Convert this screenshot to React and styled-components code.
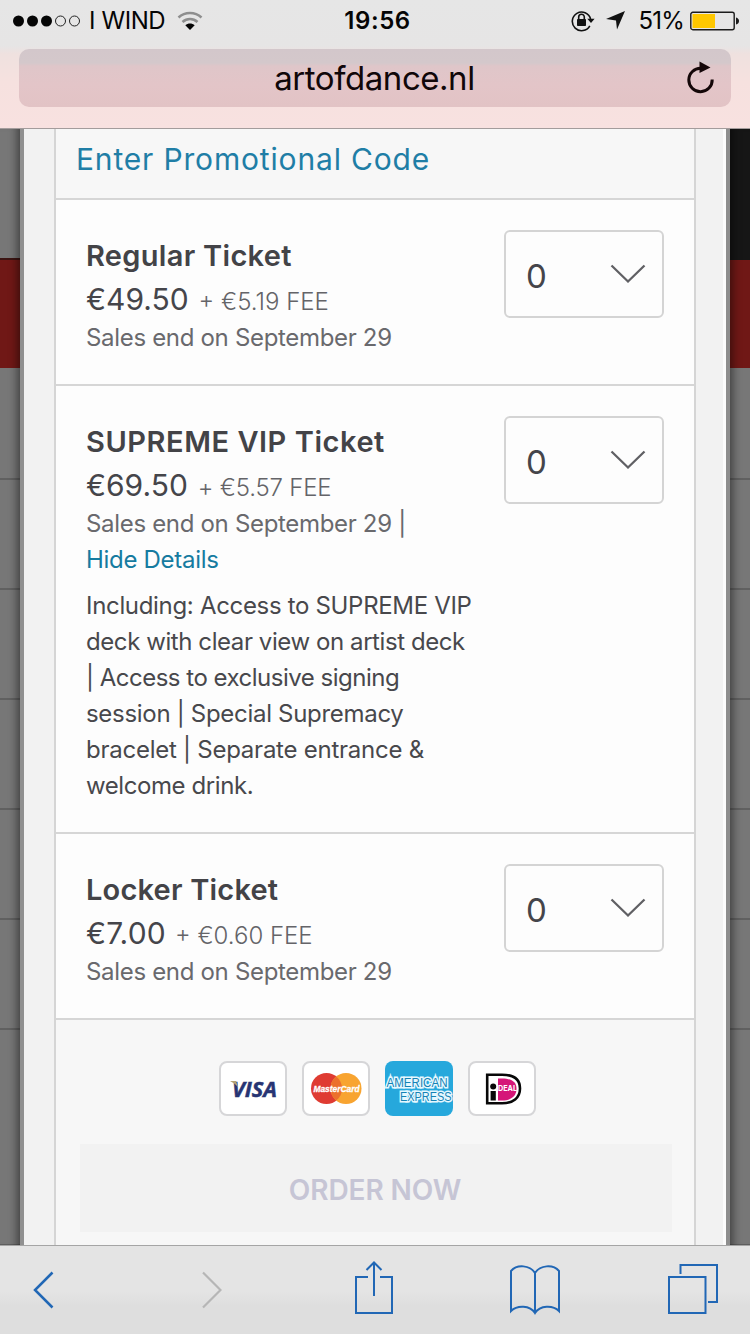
import React from 'react';
import styled, { createGlobalStyle } from 'styled-components';

const GlobalStyle = createGlobalStyle`
  *, *::before, *::after { box-sizing: border-box; }
  body {
    margin: 0;
    font-family: Inter, "Liberation Sans", sans-serif;
    color: #45454a;
    background: #777;
  }
  svg { display: block; flex: none; }
`;

const Screen = styled.div`
  width: 750px;
  height: 1334px;
  display: flex;
  flex-direction: column;
  overflow: hidden;
`;

const Header = styled.header`
  height: 129px;
  flex: none;
  border-bottom: 1px solid #a39c9c;
  background: linear-gradient(#e6e6e6 0, #e6e5e5 46px, #efe1df 54px, #f6e1df 82px, #f8e1e0 128px);
`;

const StatusBar = styled.div`
  height: 49px;
  padding: 0 11px 8px 13px;
  display: grid;
  grid-template-columns: 1fr 80px 1fr;
  align-items: center;
  color: #050505;
  font-size: 24px;
  line-height: 40px;
`;

const StatusGroup = styled.div`
  display: flex;
  align-items: center;
  justify-content: ${(p) => (p.$end ? 'flex-end' : 'flex-start')};
`;

const Carrier = styled.span`
  margin: 0 12px 0 8px;
  letter-spacing: -0.4px;
`;

const Clock = styled.span`
  font-weight: 600;
  text-align: center;
  white-space: nowrap;
  margin-left: 3px;
  letter-spacing: 0.6px;
`;

const LocationSlot = styled.span`
  margin-left: 11px;
`;

const Percent = styled.span`
  margin: 0 6px 0 12px;
  letter-spacing: -0.8px;
`;

const AddressBar = styled.div`
  height: 58px;
  margin: 0 19px;
  padding: 0 16px 0 45px;
  border-radius: 10px;
  display: flex;
  align-items: center;
  background: linear-gradient(#d3c7cb 0, #d4c8cb 14px, #dfc6c9 17px, #e3c5c8 36px, #e2c3c5 58px);
`;

const Address = styled.span`
  flex: 1;
  text-align: center;
  font-size: 33px;
  line-height: 56px;
  letter-spacing: -0.45px;
  color: #100709;
`;

const Viewport = styled.main`
  flex: 1;
  min-height: 0;
  display: flex;
  overflow: hidden;
`;

const Backdrop = styled.div`
  width: ${(p) => p.$width}px;
  flex: none;
  display: flex;
  flex-direction: column;
  box-shadow: inset ${(p) => (p.$right ? '10px' : '-10px')} 0 9px -7px rgba(0, 0, 0, 0.45);
`;

const Band = styled.div`
  height: ${(p) => p.$height}px;
  flex: none;
  position: relative;
  z-index: -1;
  background: ${(p) => p.$color || '#777'};
  border-bottom: 2px solid ${(p) => p.$edge || '#606060'};
`;

const Modal = styled.div`
  flex: 1;
  display: flex;
  padding: 0 30px;
  background: #f2f2f2;
  border-left: 4px solid #909090;
  border-right: 4px solid #8e8e8e;
  box-shadow: inset -3px 0 0 #fcfcfc;
`;

const Panel = styled.section`
  flex: 1;
  background: #fdfdfd;
  border-left: 2px solid #d5d5d5;
  border-right: 2px solid #d5d5d5;
`;

const Promo = styled.div`
  height: 71px;
  padding: 9px 0 0 20px;
  background: #f7f7f7;
  border-bottom: 2px solid #d6d6d6;
  color: #1f7ea6;
  font-size: 30px;
  line-height: 42px;
  letter-spacing: 0.83px;
`;

const TicketRow = styled.article`
  padding: 34px 30px 28px;
  display: flex;
  justify-content: space-between;
  align-items: flex-start;
  border-bottom: 2px solid #d6d6d6;
`;

const TicketInfo = styled.div`
  white-space: nowrap;
`;

const TicketName = styled.h2`
  margin: 0;
  font-size: 29px;
  font-weight: 600;
  line-height: 44px;
  color: #434347;
  letter-spacing: ${(p) => p.$track}px;
`;

const PriceLine = styled.div`
  height: 42px;
  display: flex;
  align-items: baseline;
  line-height: 42px;
`;

const Price = styled.span`
  font-size: 30px;
  letter-spacing: ${(p) => p.$track}px;
`;

const Fee = styled.span`
  margin-left: ${(p) => p.$gap || 11}px;
  font-size: 24px;
  font-weight: 350;
  color: #646468;
  letter-spacing: ${(p) => p.$track}px;
`;

const Line = styled.div`
  font-size: 24px;
  line-height: 36px;
  color: ${(p) => p.$color || '#48484c'};
  letter-spacing: ${(p) => p.$track || 0}px;
`;

const Details = styled.div`
  margin-top: 10px;
`;

const Quantity = styled.div`
  width: 160px;
  height: 88px;
  margin-top: -4px;
  padding: 3px 16px 0 20px;
  border: 2px solid #d4d4d4;
  border-radius: 6px;
  display: flex;
  align-items: center;
  justify-content: space-between;
  font-size: 33px;
  line-height: 84px;
  svg { margin-top: -4px; }
`;

const Checkout = styled.footer`
  height: 240px;
  padding: 41px 22px 0 24px;
  background: #f7f7f7;
`;

const Cards = styled.div`
  padding-left: 3px;
  display: flex;
  justify-content: center;
  gap: 14.7px;
`;

const PayCard = styled.div`
  width: 68px;
  height: 55px;
  border-radius: 8px;
  overflow: hidden;
  border: ${(p) => (p.$fill ? 'none' : '2px solid #d6d6d8')};
  background: ${(p) => p.$fill || '#fff'};
  display: flex;
  align-items: center;
  justify-content: center;
`;

const OrderButton = styled.div`
  height: 88px;
  margin-top: 28px;
  padding-right: 2px;
  background: #f2f2f2;
  color: #c6c5d5;
  font-size: 28px;
  font-weight: 600;
  line-height: 92px;
  text-align: center;
  letter-spacing: -0.1px;
`;

const Toolbar = styled.nav`
  height: 89px;
  flex: none;
  display: flex;
  align-items: flex-start;
  border-top: 1px solid #a5a5a5;
  background: linear-gradient(#e4e4e4 45px, #dedede 60px);
`;

const ToolIcon = styled.div`
  margin: 14px 0 0 ${(p) => p.$gap}px;
  color: ${(p) => p.$color || '#2167b5'};
`;

const Stroke = ({ w, h, children }) => (
  <svg width={w} height={h} viewBox={`0 0 ${w} ${h}`} fill="none" stroke="currentColor" strokeWidth="2">
    {children}
  </svg>
);

const Signal = () => (
  <svg width="68" height="12" viewBox="0 0 68 12">
    {[6, 20, 34].map((x) => <circle key={x} cx={x - 0.5} cy="6" r="5.5" fill="#050505" />)}
    {[48, 62].map((x) => <circle key={x} cx={x - 0.5} cy="6" r="5" fill="none" stroke="#222" />)}
  </svg>
);

const Wifi = () => (
  <svg width="26" height="20" viewBox="0 0 26 20" fill="none">
    <path d="M1.500 6.500C8 .5 18 .5 24.500 6.500" stroke="#8e8e8e" strokeWidth="2.600" />
    <path d="M5.500 11C10 7 16 7 20.500 11" stroke="#8e8e8e" strokeWidth="2.600" />
    <path d="M13 19L8.300 14.300C11 12 15 12 17.700 14.300Z" fill="#050505" />
  </svg>
);

const RotationLock = () => (
  <svg width="24" height="22" viewBox="0 0 24 22">
    <path d="M18.800 15.800A9.300 9.300 0 1 1 19.600 9" fill="none" stroke="#111" strokeWidth="1.600" />
    <path d="M16.300 8.700H23.600L20 13Z" fill="#111" />
    <rect x="6" y="9" width="9" height="7" rx="0.800" fill="#111" />
    <path d="M7.700 9V7a2.800 2.800 0 0 1 5.600 0V9" fill="none" stroke="#111" strokeWidth="1.600" />
  </svg>
);

const Location = () => (
  <svg width="20" height="19" viewBox="0 0 20 19">
    <path d="M19 0L11 18.500L10 9.500L0 8Z" fill="#111" />
  </svg>
);

const Battery = () => (
  <svg width="49" height="20" viewBox="0 0 49 20">
    <rect x="0.800" y="1.300" width="43.400" height="17.400" rx="2" fill="none" stroke="#1b1b1b" strokeWidth="1.400" />
    <rect x="2.500" y="3" width="22.500" height="14" fill="#fec700" />
    <path d="M46 6.500q3 1 3 3.500t-3 3.500Z" fill="#1b1b1b" />
  </svg>
);

const Reload = () => (
  <svg width="30" height="34" viewBox="0 0 30 34">
    <path d="M16 7.300A11.700 11.700 0 1 0 27.200 18.500" fill="none" stroke="#140708" strokeWidth="3" />
    <path d="M14.500 0.500L25.500 6.500L14.500 12Z" fill="#140708" />
  </svg>
);

const Chevron = () => (
  <svg width="36" height="20" viewBox="0 0 36 20" fill="none" stroke="#606064" strokeWidth="2.300">
    <path d="M1.500 1.500L18 17.500L34.500 1.500" />
  </svg>
);

const Visa = () => (
  <svg width="64" height="51" viewBox="0 0 64 51">
    <text x="11" y="33.500" fontFamily="Open Sans" fontSize="22" fontWeight="700" fontStyle="italic" fill="#273473" stroke="#273473" strokeWidth="0.500" textLength="45" lengthAdjust="spacingAndGlyphs">VISA</text>
    <path d="M9 18H15L17 24Q14 20.500 9 18Z" fill="#b5a374" />
  </svg>
);

const MasterCard = () => (
  <svg width="64" height="51" viewBox="0 0 64 51">
    <circle cx="22.500" cy="25.500" r="15.500" fill="#df3b32" />
    <circle cx="42" cy="25.500" r="15.500" fill="#f8a430" />
    <path d="M32.250 13.450A15.500 15.500 0 0 0 32.250 37.550A15.500 15.500 0 0 0 32.250 13.450Z" fill="#ec702c" />
    <text x="9.500" y="28.500" fontFamily="Liberation Sans" fontSize="9" fontWeight="700" fontStyle="italic" fill="#fff" stroke="#fff" strokeWidth="0.300" textLength="46" lengthAdjust="spacingAndGlyphs">MasterCard</text>
  </svg>
);

const Amex = () => (
  <svg width="68" height="55" viewBox="0 0 68 55" fontFamily="Liberation Sans" fontWeight="400" fontSize="12" fill="#1583b5" stroke="#e6f8ff" strokeWidth="3" paintOrder="stroke">
    <text x="1.500" y="26" textLength="61" lengthAdjust="spacingAndGlyphs">AMERICAN</text>
    <text x="15" y="39.500" textLength="51.500" lengthAdjust="spacingAndGlyphs">EXPRESS</text>
  </svg>
);

const Ideal = () => (
  <svg width="64" height="51" viewBox="0 0 64 51">
    <path d="M17.200 11.700H32C43 11.700 50 16 50 25.500S43 40.300 32 40.300H17.200Z" fill="#fff" stroke="#080808" strokeWidth="2.600" />
    <path d="M28 15.500H32C41 15.500 46.500 18.500 46.500 25.800S41 37.500 32 37.500H28Z" fill="#d51678" />
    <circle cx="23.200" cy="23.500" r="3" fill="#080808" />
    <rect x="20.600" y="28" width="5.200" height="9.500" fill="#080808" />
    <text x="28" y="27.500" fontFamily="Inter" fontSize="8" fontWeight="700" fill="#fff" textLength="19" lengthAdjust="spacingAndGlyphs">DEAL</text>
  </svg>
);

const tickets = [
  { name: 'Regular Ticket', track: 0.3, price: '€49.50', priceTrack: 0, fee: '+ €5.19 FEE', feeTrack: 0, feeGap: 10 },
  {
    name: 'SUPREME VIP Ticket', track: 0.55, price: '€69.50', priceTrack: 0, fee: '+ €5.57 FEE', feeTrack: -0.2, feeGap: 10,
    details: [
      ['Including: Access to SUPREME VIP', -0.32],
      ['deck with clear view on artist deck', -0.42],
      ['| Access to exclusive signing', -0.5],
      ['session | Special Supremacy', -0.3],
      ['bracelet | Separate entrance &', -0.25],
      ['welcome drink.', -0.42],
    ],
  },
  { name: 'Locker Ticket', track: 0.2, price: '€7.00', priceTrack: 0.2, fee: '+ €0.60 FEE', feeTrack: 0, feeGap: 9 },
];

const Ticket = ({ name, track, price, priceTrack, fee, feeTrack, feeGap, details }) => (
  <TicketRow>
    <TicketInfo>
      <TicketName $track={track}>{name}</TicketName>
      <PriceLine>
        <Price $track={priceTrack}>{price}</Price>
        <Fee $track={feeTrack} $gap={feeGap}>{fee}</Fee>
      </PriceLine>
      <Line $color="#69696d" $track={-0.32}>Sales end on September 29{details ? ' |' : ''}</Line>
      {details && <Line $color="#167ba0" $track={-0.3}>Hide Details</Line>}
      {details && (
        <Details>
          {details.map(([text, t]) => <Line key={text} $track={t}>{text}</Line>)}
        </Details>
      )}
    </TicketInfo>
    <Quantity>0<Chevron /></Quantity>
  </TicketRow>
);

const grayBands = [112, 110, 110, 110, 110, 110, 216];

export default function App() {
  return (
    <Screen>
      <GlobalStyle />
      <Header>
        <StatusBar>
          <StatusGroup>
            <Signal />
            <Carrier>I WIND</Carrier>
            <Wifi />
          </StatusGroup>
          <Clock>19:56</Clock>
          <StatusGroup $end>
            <RotationLock />
            <LocationSlot><Location /></LocationSlot>
            <Percent>51%</Percent>
            <Battery />
          </StatusGroup>
        </StatusBar>
        <AddressBar>
          <Address>artofdance.nl</Address>
          <Reload />
        </AddressBar>
      </Header>
      <Viewport>
        <Backdrop $width={20}>
          <Band $height={131} $edge="#3c1513" />
          <Band $height={108} $color="#701816" $edge="#701816" />
          {grayBands.map((h, i) => <Band key={i} $height={h} />)}
        </Backdrop>
        <Modal>
          <Panel>
            <Promo>Enter Promotional Code</Promo>
            {tickets.map((t) => <Ticket key={t.name} {...t} />)}
            <Checkout>
              <Cards>
                <PayCard><Visa /></PayCard>
                <PayCard><MasterCard /></PayCard>
                <PayCard $fill="#26a8dc"><Amex /></PayCard>
                <PayCard><Ideal /></PayCard>
              </Cards>
              <OrderButton>ORDER NOW</OrderButton>
            </Checkout>
          </Panel>
        </Modal>
        <Backdrop $width={20} $right>
          <Band $height={131} $color="#161616" $edge="#161616" />
          <Band $height={108} $color="#701816" $edge="#701816" />
          {grayBands.map((h, i) => <Band key={i} $height={h} />)}
        </Backdrop>
      </Viewport>
      <Toolbar>
        <ToolIcon $gap={33}>
          <Stroke w={21} h={56}><path d="M19.500 12.500L2 30L19.500 47.500" strokeWidth="2.500" /></Stroke>
        </ToolIcon>
        <ToolIcon $gap={147} $color="#b6b6b6">
          <Stroke w={21} h={56}><path d="M2 12.500L19.500 30L2 47.500" strokeWidth="2.200" /></Stroke>
        </ToolIcon>
        <ToolIcon $gap={131}>
          <Stroke w={42} h={56}>
            <path d="M15 17H3V53H39V17H27M21 36V3M13.500 10L21 2.500L28.500 10" />
          </Stroke>
        </ToolIcon>
        <ToolIcon $gap={114}>
          <Stroke w={52} h={56}>
            <path d="M26 13V53M26 13C21 5 8 4 2 11V51C8 45 21 45 26 53C31 45 44 45 50 51V11C44 4 31 5 26 13" />
          </Stroke>
        </ToolIcon>
        <ToolIcon $gap={106}>
          <Stroke w={52} h={56}>
            <path d="M2 17H38.500V53H2ZM13.500 14V5H50V42H41" />
          </Stroke>
        </ToolIcon>
      </Toolbar>
    </Screen>
  );
}
